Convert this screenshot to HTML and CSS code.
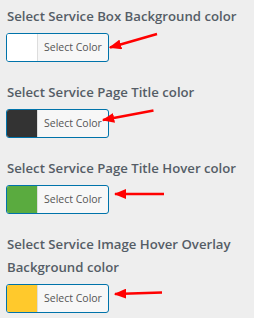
FILE: index.html
```html
<!DOCTYPE HTML>
<html>
  <head>
    <title>Service colors</title>
    <meta charset="utf-8" />
    <link rel="stylesheet" href="styles.css">
  </head>
  <body>
    <div class="controls">
      <div class="control">
        <span class="control-title">Select Service Box Background color</span>
        <button class="color-result"><span class="swatch swatch-white"></span><span class="color-text">Select Color</span></button>
      </div>
      <div class="control">
        <span class="control-title">Select Service Page Title color</span>
        <button class="color-result"><span class="swatch swatch-dark"></span><span class="color-text">Select Color</span></button>
      </div>
      <div class="control">
        <span class="control-title">Select Service Page Title Hover color</span>
        <button class="color-result"><span class="swatch swatch-green"></span><span class="color-text">Select Color</span></button>
      </div>
      <div class="control">
        <span class="control-title">Select Service Image Hover Overlay Background color</span>
        <button class="color-result"><span class="swatch swatch-yellow"></span><span class="color-text">Select Color</span></button>
      </div>
    </div>
    <!-- red arrows drawn on top of the screenshot -->
    <svg class="arrows" width="254" height="318" viewBox="0 0 254 318">
      <defs>
        <marker id="head" markerWidth="5" markerHeight="4" refX="4.5" refY="2" orient="auto" markerUnits="strokeWidth">
          <path d="M0,0 L5,2 L0,4 Z" fill="#f00" />
        </marker>
      </defs>
      <line x1="157" y1="34" x2="110" y2="47.5" />
      <line x1="153.5" y1="110.5" x2="103" y2="120" />
      <line x1="164" y1="194" x2="115" y2="194" />
      <line x1="162" y1="292.5" x2="115" y2="294" />
    </svg>
  </body>
</html>
```

FILE: styles.css
```css
*{
  margin: 0;
  padding: 0;
  box-sizing: border-box;
}
body{
  background: #eeeeee;
  font-family: "Open Sans", "Noto Sans", sans-serif;
}
.controls{
  padding: 5px 6px 0;
}
.control{
  margin-bottom: 19px;
}
.control-title{
  display: block;
  font-size: 13.2px;
  font-weight: 600;
  line-height: 23px;
  color: #555d66;
  padding-left: 1px;
  margin-bottom: 5px;
}
.color-result{
  display: flex;
  width: 103px;
  height: 29px;
  border: 1px solid #0073aa;
  border-radius: 3px;
  background: #f7f7f7;
  overflow: hidden;
  font-family: inherit;
}
.swatch{
  width: 31px;
  height: 100%;
  border-right: 1px solid #dddddd;
}
.swatch-white{ background: #ffffff; }
.swatch-dark{ background: #333333; }
.swatch-green{ background: #5aab3f; }
.swatch-yellow{ background: #ffc92c; }
.color-text{
  flex: 1;
  font-size: 10.5px;
  line-height: 27px;
  color: #555555;
  text-align: left;
  padding-left: 6px;
}
.arrows{
  position: absolute;
  top: 0;
  left: 0;
}
.arrows line{
  stroke: #f00;
  stroke-width: 2.5;
  marker-end: url(#head);
}
```
